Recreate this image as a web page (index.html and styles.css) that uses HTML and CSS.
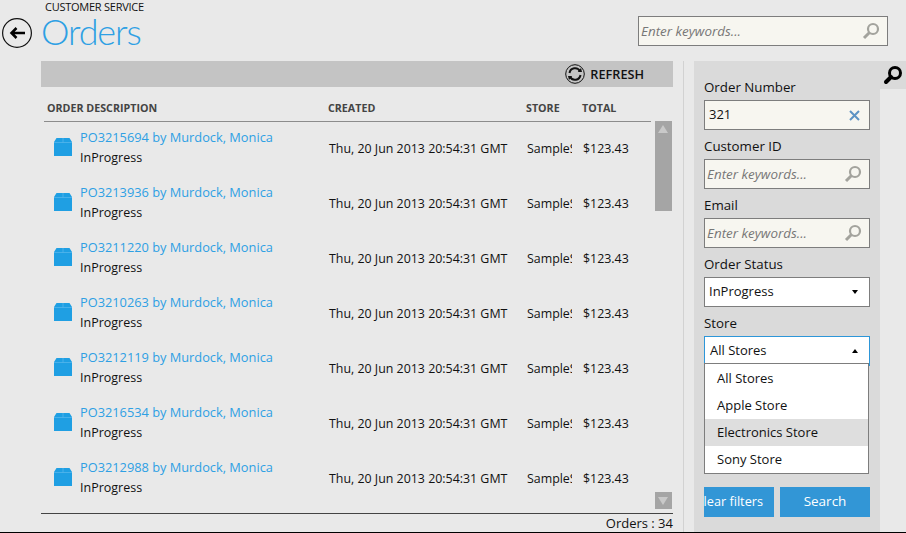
FILE: index.html
```html
<!DOCTYPE html>
<html lang="en">
<head>
    <meta charset="UTF-8">
    <title>Orders</title>
    <link rel="stylesheet" href="styles.css">
</head>
<body>
<svg class="defs" width="0" height="0">
    <symbol id="box" viewBox="0 0 18 18">
        <path d="M2.500 0H15.500L18 4V18H0V4Z" fill="#1f9fe3"/>
        <path d="M0 4.500H18M9 0V4.500" stroke="#5cb9ec" stroke-width="0.7" fill="none"/>
    </symbol>
    <symbol id="lens" viewBox="0 0 18 18">
        <circle cx="11" cy="7" r="5" fill="none" stroke="#a3a39d" stroke-width="2.2"/>
        <path d="M7.500 10.500L2 16" stroke="#a3a39d" stroke-width="3" fill="none"/>
    </symbol>
</svg>

<header class="top">
    <button class="back">
        <svg width="30" height="30" viewBox="0 0 30 30">
            <circle cx="15" cy="15" r="14.400" fill="none" stroke="#111" stroke-width="1.200"/>
            <path d="M23 15H10M14.500 10L9.500 15L14.500 20" fill="none" stroke="#000" stroke-width="2.500"/>
        </svg>
    </button>
    <div class="title">
        <div class="crumb">CUSTOMER SERVICE</div>
        <h1>Orders</h1>
    </div>
    <div class="field search-top">
        <span class="hint">Enter keywords...</span>
        <svg class="lens" width="18" height="18"><use href="#lens"/></svg>
    </div>
</header>

<div class="content">
    <main class="orders">
        <div class="toolbar">
            <svg width="20" height="20" viewBox="0 0 20 20">
                <circle cx="10" cy="10" r="9.300" fill="none" stroke="#111" stroke-width="1"/>
                <path d="M4.500 9A5.600 5.600 0 0 1 15 7.200M15.500 11A5.600 5.600 0 0 1 5 12.800" fill="none" stroke="#111" stroke-width="2"/>
                <path d="M12.800 8H17L16 4ZM7.200 12H3L4 16Z" fill="#111"/>
            </svg>
            <span>REFRESH</span>
        </div>
        <div class="grid-head">
            <span>ORDER DESCRIPTION</span>
            <span>CREATED</span>
            <span>STORE</span>
            <span>TOTAL</span>
        </div>
        <div class="grid-wrap">
            <div class="rows">
                <div class="row">
                    <svg class="box" width="18" height="18"><use href="#box"/></svg>
                    <div class="desc"><a>PO3215694 by Murdock, Monica</a><span>InProgress</span></div>
                    <span>Thu, 20 Jun 2013 20:54:31 GMT</span>
                    <span class="store">SampleStore</span>
                    <span>$123.43</span>
                </div>
                <div class="row">
                    <svg class="box" width="18" height="18"><use href="#box"/></svg>
                    <div class="desc"><a>PO3213936 by Murdock, Monica</a><span>InProgress</span></div>
                    <span>Thu, 20 Jun 2013 20:54:31 GMT</span>
                    <span class="store">SampleStore</span>
                    <span>$123.43</span>
                </div>
                <div class="row">
                    <svg class="box" width="18" height="18"><use href="#box"/></svg>
                    <div class="desc"><a>PO3211220 by Murdock, Monica</a><span>InProgress</span></div>
                    <span>Thu, 20 Jun 2013 20:54:31 GMT</span>
                    <span class="store">SampleStore</span>
                    <span>$123.43</span>
                </div>
                <div class="row">
                    <svg class="box" width="18" height="18"><use href="#box"/></svg>
                    <div class="desc"><a>PO3210263 by Murdock, Monica</a><span>InProgress</span></div>
                    <span>Thu, 20 Jun 2013 20:54:31 GMT</span>
                    <span class="store">SampleStore</span>
                    <span>$123.43</span>
                </div>
                <div class="row">
                    <svg class="box" width="18" height="18"><use href="#box"/></svg>
                    <div class="desc"><a>PO3212119 by Murdock, Monica</a><span>InProgress</span></div>
                    <span>Thu, 20 Jun 2013 20:54:31 GMT</span>
                    <span class="store">SampleStore</span>
                    <span>$123.43</span>
                </div>
                <div class="row">
                    <svg class="box" width="18" height="18"><use href="#box"/></svg>
                    <div class="desc"><a>PO3216534 by Murdock, Monica</a><span>InProgress</span></div>
                    <span>Thu, 20 Jun 2013 20:54:31 GMT</span>
                    <span class="store">SampleStore</span>
                    <span>$123.43</span>
                </div>
                <div class="row">
                    <svg class="box" width="18" height="18"><use href="#box"/></svg>
                    <div class="desc"><a>PO3212988 by Murdock, Monica</a><span>InProgress</span></div>
                    <span>Thu, 20 Jun 2013 20:54:31 GMT</span>
                    <span class="store">SampleStore</span>
                    <span>$123.43</span>
                </div>
            </div>
            <div class="scrollbar">
                <div class="thumb"><i class="arrow-up"></i></div>
                <div class="arrow-box"><i class="arrow-down"></i></div>
            </div>
        </div>
        <div class="count">Orders : 34</div>
    </main>

    <div class="divider"></div>

    <aside class="filters">
        <label>Order Number</label>
        <div class="field">
            <span class="value">321</span>
            <svg class="clear" width="11" height="11" viewBox="0 0 11 11">
                <path d="M1 1L10 10M10 1L1 10" stroke="#5d93c4" stroke-width="2" fill="none"/>
            </svg>
        </div>
        <label>Customer ID</label>
        <div class="field">
            <span class="hint">Enter keywords...</span>
            <svg class="lens" width="18" height="18"><use href="#lens"/></svg>
        </div>
        <label>Email</label>
        <div class="field">
            <span class="hint">Enter keywords...</span>
            <svg class="lens" width="18" height="18"><use href="#lens"/></svg>
        </div>
        <label>Order Status</label>
        <div class="field select">
            <span class="value">InProgress</span>
            <i class="arrow-small-down"></i>
        </div>
        <label>Store</label>
        <div class="store-select">
            <div class="field select open">
                <span class="value">All Stores</span>
                <i class="arrow-small-up"></i>
            </div>
            <ul class="menu">
                <li>All Stores</li>
                <li>Apple Store</li>
                <li class="hover">Electronics Store</li>
                <li>Sony Store</li>
            </ul>
        </div>
        <div class="actions">
            <button class="btn clear-btn"><span>Clear filters</span></button>
            <button class="btn search-btn">Search</button>
        </div>
    </aside>

    <div class="filter-tab">
        <svg width="20" height="20" viewBox="0 0 20 20">
            <circle cx="12" cy="8" r="5.500" fill="none" stroke="#000" stroke-width="3"/>
            <path d="M8 12L3 17" stroke="#000" stroke-width="4" stroke-linecap="round" fill="none"/>
        </svg>
    </div>
</div>
</body>
</html>
```
FILE: styles.css
```css
* {
    box-sizing: border-box;
}
html, body {
    height: 533px;
    overflow: hidden;
}
body {
    margin: 0;
    background: #e9e9e9;
    color: #111;
    font-family: "Open Sans", "Noto Sans", sans-serif;
    font-size: 13px;
    border-bottom: 1px solid #000;
}
.defs {
    display: block;
}

/* header */
.top {
    display: flex;
    height: 61px;
    padding-left: 2px;
}
.back {
    width: 30px;
    height: 30px;
    margin-top: 18px;
    padding: 0;
    border: none;
    background: none;
}
.back svg {
    display: block;
}
.title {
    margin-left: 9px;
}
.crumb {
    font-size: 11px;
    line-height: 14px;
    margin-left: 4px;
    letter-spacing: -0.25px;
}
h1 {
    margin: -3px 0 0 0;
    font-family: "Lato", "Open Sans", sans-serif;
    font-weight: 300;
    font-size: 36px;
    line-height: 40px;
    letter-spacing: -1.1px;
    color: #2ea0e4;
}
.search-top {
    width: 250px;
    margin: 16px 18px 0 auto;
}

/* inputs */
.field {
    display: flex;
    align-items: center;
    justify-content: space-between;
    height: 30px;
    background: #f7f6f0;
    border: 1px solid #7d7d7d;
    padding: 0 6px 0 2px;
}
.hint {
    font-style: italic;
    color: #777;
    font-size: 13.400px;
}
.value {
    font-size: 13px;
    padding: 0 0 2px 2px;
}
.lens {
    margin-right: 1px;
}
.clear {
    margin-right: 3px;
}

/* orders list */
.content {
    display: flex;
    height: 471px;
    padding-left: 41px;
}
.orders {
    width: 632px;
}
.toolbar {
    display: flex;
    align-items: center;
    justify-content: flex-end;
    gap: 5px;
    height: 26px;
    padding-right: 29px;
    background: #c4c4c4;
    font-size: 12.700px;
    font-weight: 600;
}
.grid-head {
    display: grid;
    grid-template-columns: 281px 198px 56px 60px;
    align-items: center;
    width: 607px;
    height: 35px;
    margin-left: 3px;
    padding: 8px 0 0 3px;
    border-bottom: 1px solid #8c8c8c;
    font-size: 10.700px;
    font-weight: 700;
    color: #444;
}
.grid-wrap {
    display: flex;
    height: 392px;
    border-bottom: 1px solid #444;
}
.rows {
    width: 614px;
    margin-top: -1px;
    padding-left: 13px;
}
.row {
    display: grid;
    grid-template-columns: 18px 257px 198px 56px 60px;
    align-items: center;
    height: 55px;
    font-size: 12.400px;
}
.box {
    display: block;
    margin-bottom: 3px;
}
.row > span {
    white-space: nowrap;
}
.row .store {
    width: 44.500px;
    overflow: hidden;
}
.desc {
    display: flex;
    flex-direction: column;
    margin-bottom: 4px;
    padding-left: 8px;
    line-height: 20px;
}
.desc a {
    color: #2ea0e4;
    font-size: 12.800px;
    margin-bottom: 1px;
}
.desc span {
    margin-bottom: -1px;
    font-size: 12.500px;
}
.scrollbar {
    width: 17px;
    height: 388px;
    margin-top: -1px;
    display: flex;
    flex-direction: column;
    justify-content: space-between;
}
.thumb {
    height: 90px;
    background: #a5a5a5;
    padding: 4px 0 0 3px;
}
.arrow-box {
    height: 17px;
    background: #a5a5a5;
    padding: 5px 0 0 3px;
}
.arrow-up, .arrow-down {
    display: block;
    width: 0;
    height: 0;
    border-left: 5.500px solid transparent;
    border-right: 5.500px solid transparent;
}
.arrow-up {
    border-bottom: 8px solid #c9c9c9;
}
.arrow-down {
    border-top: 8px solid #c9c9c9;
}
.count {
    text-align: right;
    font-size: 13px;
    line-height: 18px;
}

/* filter panel */
.divider {
    width: 1px;
    margin-left: 10px;
    background: #d2d2d2;
}
.filters {
    width: 186px;
    margin-left: 10px;
    padding: 16px 10px 0;
    background: #dadada;
}
.filters label {
    display: block;
    font-size: 13.300px;
    line-height: 20px;
    margin-bottom: 3px;
}
.filters .field {
    margin-bottom: 6px;
}
.filters .select {
    background: #fff;
}
.store-select {
    position: relative;
}
.filters .open {
    border-color: #2d96d8;
}
.open .value {
    padding-left: 3px;
}
.arrow-small-down, .arrow-small-up {
    width: 0;
    height: 0;
    margin-right: 5px;
    border-left: 3.500px solid transparent;
    border-right: 3.500px solid transparent;
}
.arrow-small-down {
    border-top: 4px solid #000;
}
.arrow-small-up {
    border-bottom: 4px solid #000;
}
.menu {
    position: absolute;
    top: 27px;
    left: 0;
    width: 165px;
    margin: 0;
    padding: 1px 0 0;
    list-style: none;
    background: #fff;
    border: 1px solid #7d7d7d;
    z-index: 2;
}
.menu li {
    height: 27px;
    line-height: 27px;
    padding-left: 12px;
    font-size: 13px;
}
.menu .hover {
    background: #dedede;
}
.actions {
    display: flex;
    gap: 6px;
    margin-top: 121px;
}
.btn {
    height: 30px;
    padding: 0;
    border: none;
    background: #3296d6;
    color: #fff;
    font-family: inherit;
    font-size: 13.500px;
    overflow: hidden;
}
.clear-btn {
    display: flex;
    justify-content: flex-end;
    width: 70px;
    padding-right: 11px;
    font-size: 12.700px;
    line-height: 29px;
    white-space: nowrap;
}
.search-btn {
    width: 90px;
    padding-bottom: 2px;
}
.filter-tab {
    display: flex;
    justify-content: center;
    align-items: center;
    width: 26px;
    height: 28px;
    background: #dadada;
}
```
